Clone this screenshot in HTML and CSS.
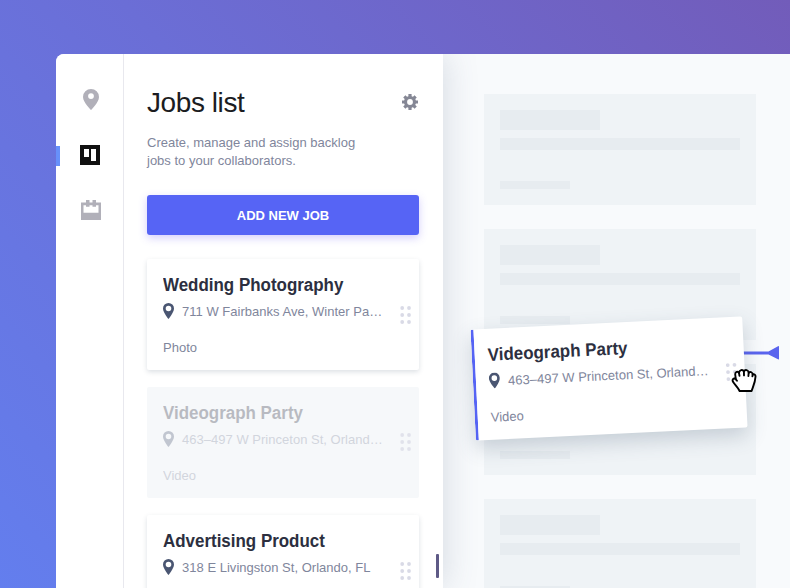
FILE: index.html
```html
<!DOCTYPE html>
<html lang="en">
<head>
<meta charset="utf-8">
<title>Jobs list</title>
<link rel="stylesheet" href="styles.css">
</head>
<body>
<svg class="defs" width="0" height="0" aria-hidden="true">
  <symbol id="pin" viewBox="0 0 11 16"><path fill-rule="evenodd" d="M5.500 0A5.500 5.500 0 0 0 0 5.500C0 9.600 5.500 16 5.500 16S11 9.600 11 5.500A5.500 5.500 0 0 0 5.500 0zm0 2.700a2.800 2.800 0 1 1 0 5.600 2.800 2.800 0 0 1 0-5.600z"/></symbol>
  <symbol id="grip" viewBox="0 0 12 18"><circle cx="2.200" cy="2" r="1.900"/><circle cx="9" cy="2" r="1.900"/><circle cx="2.200" cy="9" r="1.900"/><circle cx="9" cy="9" r="1.900"/><circle cx="2.200" cy="16" r="1.900"/><circle cx="9" cy="16" r="1.900"/></symbol>
</svg>
<div class="window">
  <nav class="rail">
    <a class="rail-item"><svg width="16" height="21" viewBox="0 0 16 21"><path fill-rule="evenodd" d="M8 0a8 8 0 0 0-8 8c0 5.500 8 13 8 13s8-7.500 8-13a8 8 0 0 0-8-8zm0 4.200a2.900 2.900 0 1 1 0 5.800 2.900 2.900 0 0 1 0-5.800z"/></svg></a>
    <a class="rail-item active"><svg width="20" height="20" viewBox="0 0 20 20"><path fill-rule="evenodd" d="M0 0h20v20H0zM4 4v8h5V4zm7 0v12h5V4z"/></svg></a>
    <a class="rail-item"><svg width="20" height="20" viewBox="0 0 20 20"><path fill-rule="evenodd" d="M0 2.500h5V0h3.500v2.500h3V0H15v2.500h5V20H0zM2.500 5.300v7.400h15V5.300H15v1.500h-3.500V5.300h-3v1.500H5V5.300z"/></svg></a>
  </nav>
  <section class="jobs">
    <header class="jobs-head">
      <h1>Jobs list</h1>
      <svg class="gear" width="16" height="16" viewBox="0 0 16 16"><circle cx="8" cy="8" r="4.500" fill="none" stroke="currentColor" stroke-width="3.200"/><path fill="none" stroke="currentColor" stroke-width="3.200" d="M8 0v3M8 13v3M0 8h3M13 8h3M2.340 2.340l2 2M11.660 11.660l2 2M2.340 13.660l2-2M11.660 4.340l2-2"/></svg>
    </header>
    <p class="intro">Create, manage and assign backlog<br>jobs to your collaborators.</p>
    <button class="add">ADD NEW JOB</button>
    <div class="cards">
      <article class="card">
        <h2>Wedding Photography</h2>
        <div class="place"><svg class="pin"><use href="#pin"/></svg><span>711 W Fairbanks Ave, Winter Pa…</span></div>
        <div class="kind">Photo</div>
        <svg class="grip"><use href="#grip"/></svg>
      </article>
      <article class="card ghost">
        <h2>Videograph Party</h2>
        <div class="place"><svg class="pin"><use href="#pin"/></svg><span>463–497 W Princeton St, Orland…</span></div>
        <div class="kind">Video</div>
        <svg class="grip"><use href="#grip"/></svg>
      </article>
      <article class="card">
        <h2>Advertising Product</h2>
        <div class="place"><svg class="pin"><use href="#pin"/></svg><span>318 E Livingston St, Orlando, FL</span></div>
        <svg class="grip"><use href="#grip"/></svg>
      </article>
    </div>
    <i class="scroll"></i>
  </section>
  <main class="board">
    <div class="slot"><i class="b1"></i><i class="b2"></i><i class="b3"></i></div>
    <div class="slot"><i class="b1"></i><i class="b2"></i><i class="b3"></i></div>
    <div class="slot"><i class="b1"></i><i class="b2"></i><i class="b3"></i></div>
    <div class="slot"><i class="b1"></i><i class="b2"></i><i class="b3"></i></div>
  </main>
</div>
<svg class="pointer" width="40" height="14" viewBox="0 0 40 14"><path d="M0 5.500h28.500L38 .2q1-.5 1 .6v12q0 1-1 .4L28.500 8.400H0z"/></svg>
<article class="card dragged">
  <h2>Videograph Party</h2>
  <div class="place"><svg class="pin"><use href="#pin"/></svg><span>463–497 W Princeton St, Orland…</span></div>
  <div class="kind">Video</div>
  <svg class="grip"><use href="#grip"/></svg>
</article>
<svg class="hand" width="26" height="26" viewBox="0 0 26 26"><path d="M8.600 23C7 19.300 3.800 16.800 2 13.800C.8 11.300 2.700 9.600 4.800 11.200L4.200 6.500C4.100 3.800 6.800 3 8 4.900C8.200 1.700 11.800 1.100 12.900 3.500C14.100 1.100 17.400 1.900 17.700 4.700C19.600 3.300 21.500 4.300 21.700 6.500C23.400 5.900 24.700 7 24.500 8.700C24.200 14.500 22 18.500 20.600 23Z"/><path d="M8 4.900l.5 3M12.900 3.500l.1 3.900M17.700 4.700l-.3 3.300M21.700 6.500l-.3 1.800M4.800 11.200l1.200 1.600"/></svg>
</body>
</html>
```
FILE: styles.css
```css
* { box-sizing: border-box; }
html, body { height: 100%; }
body {
  margin: 0;
  padding: 54px 0 0 56px;
  position: relative;
  overflow: hidden;
  font-family: "Liberation Sans", Arial, sans-serif;
  background: linear-gradient(47deg, #637eee 0%, #6b6ed6 50%, #725cba 100%);
}
.defs { position: absolute; }
h1, h2, p { margin: 0; font-weight: 400; }
svg { display: block; fill: currentColor; }
i { display: block; }

.window {
  display: flex;
  height: 534px;
  overflow: hidden;
  border-radius: 8px 0 0 0;
  background: #f8fafc;
}
.rail {
  position: relative;
  z-index: 2;
  width: 68px;
  flex: none;
  padding-top: 18px;
  background: #fff;
  border-right: 1px solid #e8e8ee;
  color: #b1b0b9;
}
.rail-item {
  display: flex;
  align-items: center;
  justify-content: center;
  height: 55px;
  padding-left: 2px;
}
.rail-item.active {
  position: relative;
  padding: 0 0 0 1px;
  color: #111;
}
.rail-item.active::before {
  content: "";
  position: absolute;
  left: 0;
  top: 19px;
  width: 4px;
  height: 20px;
  background: #6790fa;
}
.rail-item:last-child { padding-top: 1px; padding-left: 3px; }

.jobs {
  position: relative;
  z-index: 1;
  width: 319px;
  flex: none;
  padding: 31px 24px 0 23px;
  background: #fff;
  box-shadow: 4px 0 30px rgba(70, 90, 120, .17);
}
.jobs-head {
  display: flex;
  align-items: center;
  justify-content: space-between;
  height: 36px;
}
h1 { font-size: 28px; line-height: 36px; color: #1b1c21; letter-spacing: -.42px; }
.gear { color: #858795; margin: -2px 1px 0 0; }
.intro {
  margin-top: 13px;
  font-size: 13px;
  line-height: 18px;
  color: #7f869c;
}
.add {
  display: block;
  width: 272px;
  height: 40px;
  margin-top: 25px;
  padding: 1px 0 0;
  border: 0;
  border-radius: 3px;
  font: 700 13px "Liberation Sans", Arial, sans-serif;
  color: #fff;
  background: #5664f5;
  box-shadow: 0 3px 8px rgba(100, 80, 240, .28);
}
.cards { display: flex; flex-direction: column; gap: 17px; margin-top: 24px; }
.card {
  position: relative;
  flex: none;
  width: 272px;
  height: 111px;
  padding: 15px 16px 0;
  border-radius: 2px;
  background: #fff;
  box-shadow: 0 2px 5px rgba(80, 100, 120, .2);
}
/* Slightly condensed bold */
h2 {
  font-size: 18px;
  line-height: 22px;
  font-weight: 700;
  color: #2c2f40;
  white-space: nowrap;
  transform: scaleX(.941);
  transform-origin: 0 50%;
}
.place {
  display: flex;
  align-items: center;
  gap: 8px;
  height: 16px;
  margin-top: 7px;
  font-size: 13px;
  letter-spacing: .02px;
  color: #7f869c;
  white-space: nowrap;
}
.pin { width: 11px; height: 16px; color: #4a5672; }
.kind { margin-top: 21px; font-size: 13px; line-height: 16px; color: #7f869c; }
.grip { position: absolute; left: 253px; top: 47px; width: 12px; height: 18px; color: #d9dae6; }
.ghost { background: #f6f8fa; box-shadow: none; }
.ghost h2, .ghost .place, .ghost .kind { opacity: .3; }
.ghost .grip { top: 46px; opacity: .7; }
.scroll {
  position: absolute;
  right: 4px;
  top: 500px;
  width: 3px;
  height: 24px;
  border-radius: 1px;
  background: #5e5a86;
}

.board { display: flex; flex-direction: column; gap: 24px; padding: 40px 0 0 41px; }
.slot {
  flex: none;
  width: 272px;
  height: 111px;
  padding: 16px;
  background: #eff3f6;
}
.slot i { background: #e7ecf0; }
.b1 { width: 100px; height: 20px; }
.b2 { width: 240px; height: 12px; margin-top: 8px; }
.b3 { width: 70px; height: 8px; margin-top: 31px; }

/* Drag preview and cursor float above the board */
.pointer { position: absolute; left: 740px; top: 346px; color: #5a64ee; }
.dragged {
  position: absolute;
  left: 473px;
  top: 323px;
  transform: rotate(-2.800deg);
  border-left: 3px solid #5664f5;
  padding-left: 13px;
  box-shadow: 0 8px 20px rgba(60, 80, 110, .23);
}
.dragged .grip { left: 250px; top: 46px; }
.hand {
  position: absolute;
  left: 731px;
  top: 368px;
  fill: #fff;
  stroke: #000;
  stroke-width: 1.900;
  stroke-linejoin: round;
  stroke-linecap: round;
}
```
